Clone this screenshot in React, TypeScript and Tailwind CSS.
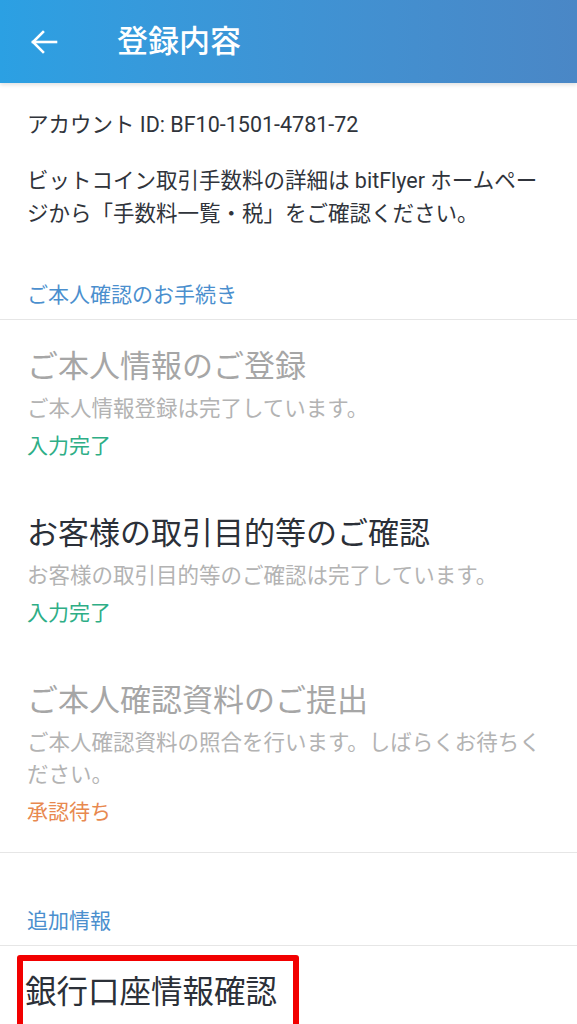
import React from "react";

const font = { fontFamily: 'Roboto, "Noto Sans CJK JP", sans-serif' };

interface StepProps {
  title: string;
  note: string;
  status: string;
  pending?: boolean;
  active?: boolean;
}

function Step({ title, note, status, pending = false, active = false }: StepProps) {
  return (
    <div>
      <h2 className={`text-[31px] leading-[40px] ${active ? "text-[#2b3038]" : "text-[#a6a6a6]"}`}>
        {title}
      </h2>
      <p className="mt-[6px] text-[21.5px] leading-[32px] text-[#b3b3b3]">{note}</p>
      <p className={`mt-[5px] text-[21px] leading-[32px] ${pending ? "text-[#e8894f]" : "text-[#2eae86]"}`}>
        {status}
      </p>
    </div>
  );
}

export default function App() {
  return (
    <div className="w-[577px] h-[1024px] overflow-hidden bg-white" style={font}>
      {/* App bar */}
      <header className="relative z-10 h-[83px] flex items-center bg-gradient-to-r from-[#2ba0e3] to-[#4a87c6] shadow-[0_2px_4px_rgba(0,0,0,0.12)]">
        <div className="w-[117px] flex items-center pl-[30px]">
          <svg width="28" height="26" viewBox="0 0 28 26" fill="none" stroke="white" strokeWidth="2.6" strokeLinecap="square">
            <path d="M3 13h23" />
            <path d="M13 3 3 13l10 10" />
          </svg>
        </div>
        <h1 className="text-[31px] leading-[40px] text-white font-medium">登録内容</h1>
      </header>

      {/* Account info */}
      <section className="px-[27px] pt-[28px] pb-[10px] border-b border-[#e6e6e6]">
        <p className="text-[21.5px] leading-[28px] text-[#30343b]">アカウント ID: BF10-1501-4781-72</p>
        <p className="mt-[25px] text-[21.5px] leading-[33px] text-[#30343b]">
          ビットコイン取引手数料の詳細は bitFlyer ホームページから「手数料一覧・税」をご確認ください。
        </p>
        <p className="mt-[51px] text-[21px] leading-[28px] text-[#4b8fce]">ご本人確認のお手続き</p>
      </section>

      {/* Verification steps */}
      <section className="px-[27px] pt-[27px] pb-[24px] border-b border-[#e6e6e6] flex flex-col gap-[52px]">
        <Step title="ご本人情報のご登録" note="ご本人情報登録は完了しています。" status="入力完了" />
        <Step
          title="お客様の取引目的等のご確認"
          note="お客様の取引目的等のご確認は完了しています。"
          status="入力完了"
          active
        />
        <Step
          title="ご本人確認資料のご提出"
          note="ご本人確認資料の照合を行います。しばらくお待ちください。"
          status="承認待ち"
          pending
        />
      </section>

      {/* Additional info */}
      <section className="px-[27px] pt-[54px] pb-[10px] border-b border-[#e6e6e6]">
        <p className="text-[21px] leading-[28px] text-[#4b8fce]">追加情報</p>
      </section>

      <section className="pl-[17px] pt-[9px]">
        <div className="inline-block border-[6px] border-[#f20000] rounded-[3px] pl-[2px] pr-[16px] pt-[12px] pb-[20px]">
          <h2 className="text-[31.5px] leading-[40px] text-[#2b3038]">銀行口座情報確認</h2>
        </div>
      </section>
    </div>
  );
}
